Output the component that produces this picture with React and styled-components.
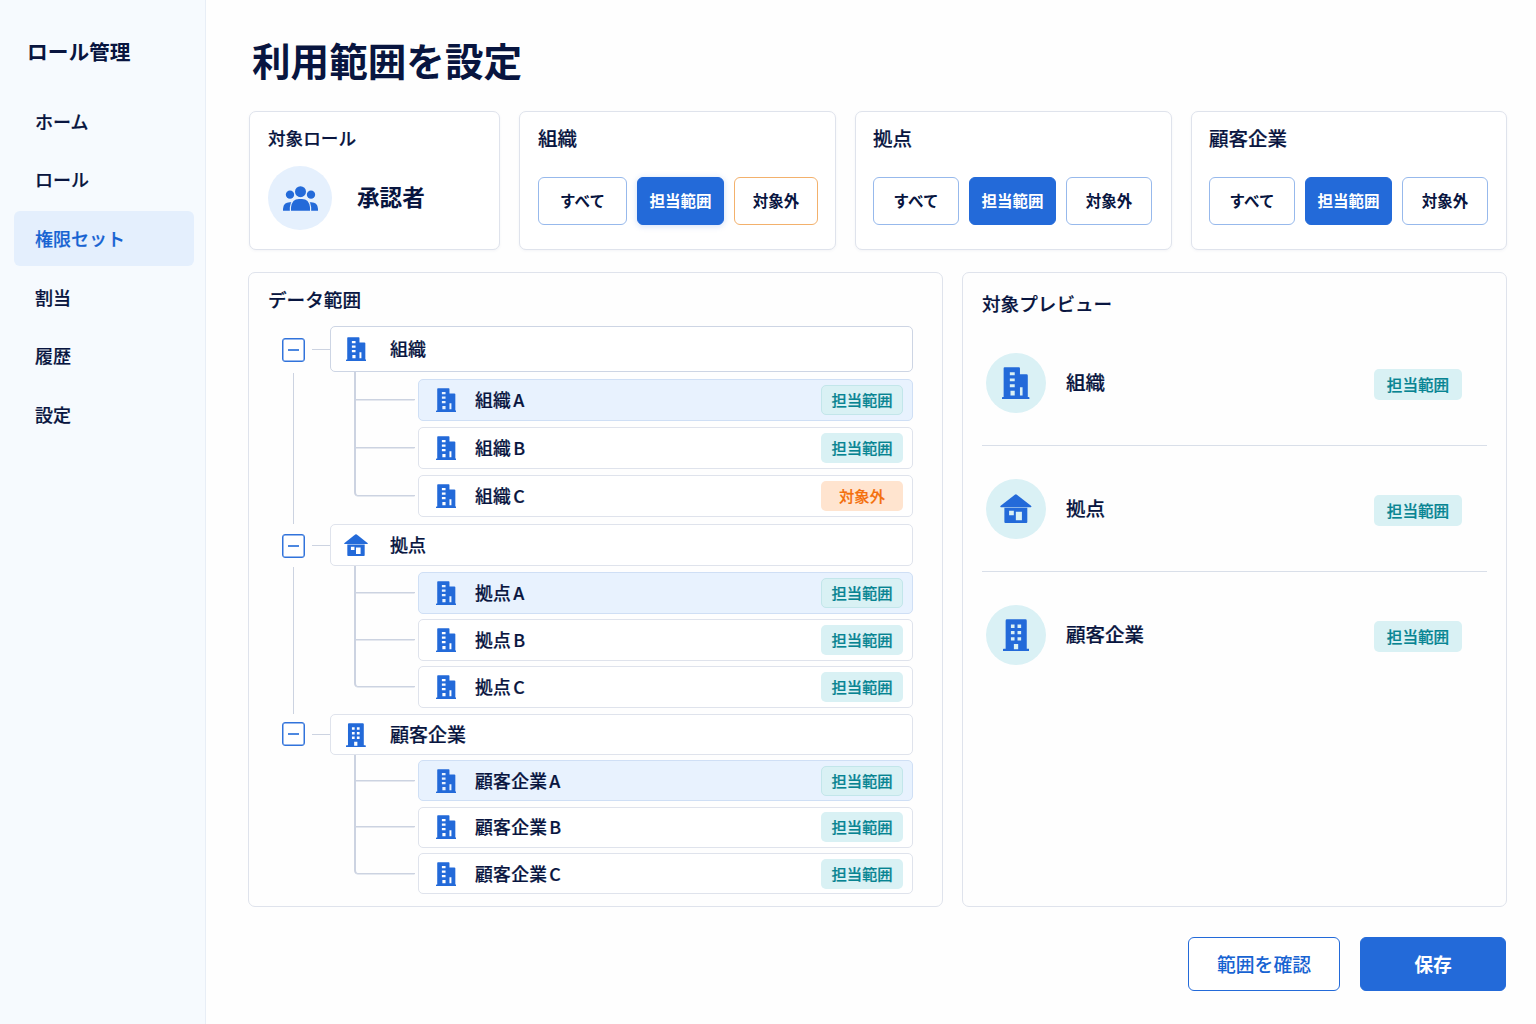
import { useState } from 'react';
import styled, { createGlobalStyle, css, ThemeProvider } from 'styled-components';

const theme = {
  colors: {
    text: '#08153f',
    primary: '#236ad9',
    link: '#1763d2',
    sidebar: '#f6fafe',
    active: '#e4effd',
    border: '#dfe3ec',
    line: '#ccd3e1',
    teal: '#078492',
    tealBg: '#d9f1f4',
    orange: '#f46f0b',
    orangeBg: '#ffe4cf',
  },
};

const GlobalStyle = createGlobalStyle`
  * {
    box-sizing: border-box;
  }

  body {
    margin: 0;
    background: #fefefe;
    color: ${theme.colors.text};
    font-family: "Noto Sans CJK JP", "Noto Sans", sans-serif;
    font-weight: 500;
  }

  button {
    font: inherit;
    color: inherit;
    cursor: pointer;
  }
`;

// sits between the Medium and Bold cuts of the font
const semiBold = css`
  -webkit-text-stroke: 0.2px currentColor;
`;

const Layout = styled.div`
  display: flex;
  width: 1536px;
  height: 1024px;
  overflow: hidden;
`;

const Sidebar = styled.aside`
  flex: none;
  width: 206px;
  padding: 35px 11px 0 14px;
  background: ${({ theme }) => theme.colors.sidebar};
  border-right: 1px solid #e8eef6;
`;

const Brand = styled.div`
  height: 32px;
  padding-left: 13px;
  font-size: 20.7px;
  line-height: 32px;
  font-weight: 700;
`;

const Nav = styled.nav`
  display: flex;
  flex-direction: column;
  gap: 3.7px;
  margin-top: 27px;
`;

const NavItem = styled.a`
  display: flex;
  align-items: center;
  height: 55px;
  padding: 0 0 2px 21px;
  border-radius: 6px;
  font-size: 18px;
  ${semiBold}
  background: ${({ theme, $active }) => ($active ? theme.colors.active : 'transparent')};
  color: ${({ theme, $active }) => ($active ? theme.colors.link : theme.colors.text)};
`;

const Main = styled.main`
  display: flex;
  flex-direction: column;
  flex: 1;
  padding: 29px 29px 0 42px;
`;

const PageTitle = styled.h1`
  height: 60px;
  margin: 0 0 22px;
  padding-left: 4px;
  font-size: 38.6px;
  line-height: 60px;
  font-weight: 700;
`;

const Filters = styled.section`
  display: grid;
  grid-template-columns: 251px 317px 317px 316px;
  gap: 19px;
  padding-left: 1px;
`;

const Card = styled.div`
  height: 139px;
  padding: 12px 17px 0 ${({ $inset = 17 }) => $inset}px;
  border: 1px solid ${({ theme }) => theme.colors.border};
  border-radius: 7px;
  background: #fff;
  box-shadow: 0 1px 3px rgba(30, 60, 120, 0.05);
`;

const CardTitle = styled.h2`
  margin: 0;
  height: 28px;
  line-height: 28px;
  font-size: ${({ $size = 19.5 }) => $size}px;
  font-weight: 500;
  ${semiBold}
`;

const RoleRow = styled.div`
  display: flex;
  align-items: center;
  gap: 25px;
  margin-top: 14px;
  font-size: 22.6px;
  font-weight: 700;
`;

const RoleName = styled.span`
  padding-bottom: 4px;
`;

const IconCircle = styled.span`
  display: flex;
  align-items: center;
  justify-content: center;
  flex: none;
  width: ${({ $size }) => $size}px;
  height: ${({ $size }) => $size}px;
  border-radius: 50%;
  background: ${({ $tone }) => ($tone === 'blue' ? '#e5f0fd' : '#daf1f5')};
  color: ${({ theme }) => theme.colors.primary};
`;

const Options = styled.div`
  display: grid;
  grid-template-columns: ${({ $columns }) => $columns};
  gap: 10px;
  margin-top: 25px;
`;

const Option = styled.button`
  height: 48px;
  padding: 0 0 2px;
  border: 1px solid ${({ $warn }) => ($warn ? '#f3b16c' : '#97b9ec')};
  border-radius: 6px;
  background: #fff;
  font-size: 15.5px;
  font-weight: 700;

  ${({ $selected, $raised, theme }) =>
    $selected &&
    css`
      border-color: ${theme.colors.primary};
      background: ${theme.colors.primary};
      color: #fff;
      box-shadow: ${$raised ? '0 1px 6px rgba(35, 106, 217, 0.22)' : 'none'};
    `}
`;

const Panels = styled.section`
  display: grid;
  grid-template-columns: 695px 545px;
  gap: 19px;
  margin-top: 22px;
`;

const Panel = styled.div`
  height: 635px;
  padding: ${({ $padding }) => $padding};
  border: 1px solid ${({ theme }) => theme.colors.border};
  border-radius: 7px;
`;

const PanelTitle = styled.h2`
  height: 28px;
  margin: 0;
  line-height: 28px;
  font-size: 18.6px;
  font-weight: 500;
  ${semiBold}
`;

const Tree = styled.div`
  margin-top: 13px;
  padding-left: 14px;
`;

const Group = styled.div`
  display: flex;
`;

const Rail = styled.div`
  display: flex;
  flex-direction: column;
  align-items: center;
  width: 23px;
`;

const ToggleSlot = styled.div`
  display: flex;
  align-items: center;
  height: ${({ $height }) => $height}px;
`;

const Toggle = styled.button`
  display: flex;
  align-items: center;
  justify-content: center;
  width: 23px;
  height: 24px;
  padding: 0;
  border: 1px solid #3173db;
  border-radius: 3px;
  background: #fff;
  box-shadow: inset 0 0 0 0.5px #3173db;

  &::before {
    content: "";
    width: 11px;
    height: 2px;
    background: #4d88e0;
  }
`;

const RailLine = styled.div`
  flex: 1;
  width: 1px;
  background: ${({ theme }) => theme.colors.line};
`;

const Connector = styled.div`
  width: 18px;
  height: 1px;
  margin: ${({ $top }) => $top}px 0 0 7px;
  background: ${({ theme }) => theme.colors.line};
`;

const GroupBody = styled.div`
  width: 583px;
  padding-bottom: ${({ $tail }) => $tail}px;
`;

const NodeBox = styled.div`
  display: flex;
  align-items: center;
  border: 1px solid ${({ $strong }) => ($strong ? '#cdd5e4' : '#dfe3ec')};
  border-radius: 5px;
  background: #fff;
  ${semiBold}
`;

const ParentNode = styled(NodeBox)`
  height: ${({ $height }) => $height}px;
  padding-left: 13px;
  font-size: ${({ $size }) => $size}px;
`;

const NodeIcon = styled.span`
  display: flex;
  justify-content: center;
  width: ${({ $width }) => $width}px;
  color: ${({ theme }) => theme.colors.primary};
`;

const ParentLabel = styled.span`
  margin-left: 22px;
  padding-bottom: 2px;
`;

const ChildRow = styled.div`
  display: flex;
  padding-left: 24px;
`;

const Branch = styled.div`
  width: 61px;
  margin-right: 3px;
`;

const Elbow = styled.div`
  height: ${({ $height }) => $height}px;
  border: solid ${({ theme }) => theme.colors.line};
  border-width: 0 0 1px 2px;
  border-bottom-left-radius: ${({ $last }) => ($last ? 4 : 0)}px;
  box-shadow: 0 1px 0 -0.5px ${({ theme }) => theme.colors.line};
`;

const Stem = styled.div`
  height: ${({ $height }) => $height}px;
  border-left: 2px solid ${({ theme }) => theme.colors.line};
`;

const ChildNode = styled(NodeBox)`
  flex: 1;
  height: ${({ $height }) => $height}px;
  margin-top: ${({ $gap }) => $gap}px;
  padding: 0 9px 0 16px;
  font-size: 17.8px;
  letter-spacing: 0.3px;

  ${({ $active }) =>
    $active &&
    css`
      background: #e8f2fe;
      border-color: #cfdff5;
    `}
`;

const ChildLabel = styled.span`
  flex: 1;
  margin-left: 18px;
  padding-bottom: 2px;
`;

const Suffix = styled.span`
  margin-left: 2px;
`;

const Badge = styled.span`
  display: flex;
  align-items: center;
  justify-content: center;
  flex: none;
  width: ${({ $large }) => ($large ? 88 : 82)}px;
  height: ${({ $large }) => ($large ? 31 : 30)}px;
  padding-bottom: 2px;
  border: 1px solid ${({ $outlined }) => ($outlined ? '#c2e6ea' : 'transparent')};
  border-radius: 5px;
  font-size: ${({ $large }) => ($large ? 15.6 : 15.3)}px;
  letter-spacing: 0;
  ${semiBold}
  background: ${({ theme, $warn }) => ($warn ? theme.colors.orangeBg : theme.colors.tealBg)};
  color: ${({ theme, $warn }) => ($warn ? theme.colors.orange : theme.colors.teal)};
`;

const PreviewList = styled.div`
  margin-top: 2px;
`;

const PreviewRow = styled.div`
  display: flex;
  align-items: center;
  height: 126px;
  padding: 0 25px 0 4px;
  border-top: 1px solid #d9dfe9;
  font-size: 19.5px;
  ${semiBold}

  &:first-child {
    border-color: transparent;
  }
`;

const PreviewLabel = styled.span`
  flex: 1;
  margin-left: 20px;
  padding-bottom: 2px;
`;

const BadgeSlot = styled.span`
  padding-top: 4px;
`;

const Footer = styled.footer`
  display: flex;
  justify-content: flex-end;
  gap: 20px;
  margin-top: 30px;
  padding-right: 1px;
`;

const FooterButton = styled.button`
  width: ${({ $width }) => $width}px;
  height: 54px;
  padding-bottom: 2px;
  border: 1px solid ${({ theme }) => theme.colors.primary};
  border-radius: 6px;
  font-size: 18.8px;
  font-weight: ${({ $primary }) => ($primary ? 700 : 500)};
  background: ${({ theme, $primary }) => ($primary ? theme.colors.primary : '#fff')};
  color: ${({ theme, $primary }) => ($primary ? '#fff' : theme.colors.link)};
`;

function BuildingIcon({ height = 24 }) {
  return (
    <svg width={(height * 84) / 98} height={height} viewBox="0 0 84 98" fill="currentColor" fillRule="evenodd">
      <path d="M5 92V4a3 3 0 0 1 3-3h44a3 3 0 0 1 3 3v18h20a4 4 0 0 1 4 4v66h3a2 2 0 0 1 2 2v4H0v-4a2 2 0 0 1 2-2zM24 16v9h15v-9zM24 35v9h15v-9zM24 53v9h15v-9zM26 73v14h13V73zM55 62v25h8V62z" />
    </svg>
  );
}

function HouseIcon({ height = 22 }) {
  return (
    <svg width={(height * 94) / 86} height={height} viewBox="0 0 94 86" fill="currentColor" fillRule="evenodd">
      <path d="M44 2a5 5 0 0 1 6 0l42 33q3 4-1 4H3q-4 0-1-4z" />
      <path d="M13 41h68v42a3 3 0 0 1-3 3H16a3 3 0 0 1-3-3zM27 50v13h14V50zM47 53v25h18V53z" />
    </svg>
  );
}

function OfficeIcon({ height = 24 }) {
  return (
    <svg width={(height * 80) / 97} height={height} viewBox="0 0 80 97" fill="currentColor" fillRule="evenodd">
      <path d="M8 90V5a4 4 0 0 1 4-4h56a4 4 0 0 1 4 4v85h6a2 2 0 0 1 2 2v5H0v-5a2 2 0 0 1 2-2zM24 17v10h11V17zM44 17v10h11V17zM24 36v10h11V36zM44 36v10h11V36zM24 55v10h11V55zM44 55v10h11V55zM33 76v16h13V76z" />
    </svg>
  );
}

function PeopleIcon() {
  return (
    <svg width="35" height="25" viewBox="0 0 105 75" fill="currentColor">
      <circle cx="21" cy="26" r="12.500" />
      <circle cx="84" cy="26" r="12.500" />
      <path d="M0 74V68Q2 49 20 49H85Q103 49 105 68V74Z" />
      <g stroke="#e5f0fd" strokeWidth="7" paintOrder="stroke">
        <circle cx="52.500" cy="17" r="16.500" />
        <path d="M24 74V64Q27 39 48 39H57Q78 39 81 64V74Z" />
      </g>
    </svg>
  );
}

const icons = {
  building: BuildingIcon,
  house: HouseIcon,
  office: OfficeIcon,
};

const navItems = ['ホーム', 'ロール', '権限セット', '割当', '履歴', '設定'];
const options = ['すべて', '担当範囲', '対象外'];

const filters = [
  { title: '組織', columns: '89px 87px 84px', inset: 18, highlight: true },
  { title: '拠点', columns: '86px 87px 86px' },
  { title: '顧客企業', columns: '86px 87px 86px' },
];

const groups = [
  { name: '組織', icon: 'building', size: 18, head: 46, lead: 7, row: 42, gap: 6, tail: 7, excluded: ['C'] },
  { name: '拠点', icon: 'house', size: 18, head: 42, lead: 6, row: 42, gap: 5, tail: 6, excluded: [] },
  { name: '顧客企業', icon: 'office', size: 19, head: 41, lead: 5, row: 41, gap: 5.5, tail: 0, excluded: [] },
];

const previews = [
  { name: '組織', icon: 'building', height: 32 },
  { name: '拠点', icon: 'house', height: 29 },
  { name: '顧客企業', icon: 'office', height: 32 },
];

function FilterCard({ title, columns, inset, highlight }) {
  const [selected, setSelected] = useState('担当範囲');

  return (
    <Card $inset={inset}>
      <CardTitle>{title}</CardTitle>
      <Options $columns={columns}>
        {options.map((option) => (
          <Option
            key={option}
            $selected={option === selected}
            $raised={highlight}
            $warn={highlight && option === '対象外'}
            onClick={() => setSelected(option)}
          >
            {option}
          </Option>
        ))}
      </Options>
    </Card>
  );
}

function TreeGroup({ group, last }) {
  const { name, icon, size, head, lead, row, gap, tail, excluded } = group;
  const Icon = icons[icon];

  return (
    <Group>
      <Rail>
        <ToggleSlot $height={last ? head - 1 : head + 1}>
          <Toggle aria-label={name} />
        </ToggleSlot>
        {!last && <RailLine />}
      </Rail>
      <Connector $top={Math.floor(head / 2)} />
      <GroupBody $tail={tail}>
        <ParentNode $height={head} $size={size} $strong={icon === 'building'}>
          <NodeIcon $width={24}>
            <Icon />
          </NodeIcon>
          <ParentLabel>{name}</ParentLabel>
        </ParentNode>
        {['A', 'B', 'C'].map((suffix, i) => {
          const space = i === 0 ? lead : gap;
          const isLast = i === 2;
          const warn = excluded.includes(suffix);
          return (
            <ChildRow key={suffix}>
              <Branch>
                <Elbow $height={space + row / 2} $last={isLast} />
                {!isLast && <Stem $height={row / 2} />}
              </Branch>
              <ChildNode $height={row} $gap={space} $active={i === 0}>
                <NodeIcon $width={22}>
                  <BuildingIcon />
                </NodeIcon>
                <ChildLabel>
                  {name}
                  <Suffix>{suffix}</Suffix>
                </ChildLabel>
                <Badge $warn={warn} $outlined={i === 0}>
                  {warn ? '対象外' : '担当範囲'}
                </Badge>
              </ChildNode>
            </ChildRow>
          );
        })}
      </GroupBody>
    </Group>
  );
}

export default function App() {
  return (
    <ThemeProvider theme={theme}>
      <GlobalStyle />
      <Layout>
        <Sidebar>
          <Brand>ロール管理</Brand>
          <Nav>
            {navItems.map((item) => (
              <NavItem key={item} $active={item === '権限セット'}>
                {item}
              </NavItem>
            ))}
          </Nav>
        </Sidebar>
        <Main>
          <PageTitle>利用範囲を設定</PageTitle>
          <Filters>
            <Card $inset={18}>
              <CardTitle $size={17.6}>対象ロール</CardTitle>
              <RoleRow>
                <IconCircle $size={64} $tone="blue">
                  <PeopleIcon />
                </IconCircle>
                <RoleName>承認者</RoleName>
              </RoleRow>
            </Card>
            {filters.map((filter) => (
              <FilterCard key={filter.title} {...filter} />
            ))}
          </Filters>
          <Panels>
            <Panel $padding="12px 28px 0 19px">
              <PanelTitle>データ範囲</PanelTitle>
              <Tree>
                {groups.map((group, i) => (
                  <TreeGroup key={group.name} group={group} last={i === groups.length - 1} />
                ))}
              </Tree>
            </Panel>
            <Panel $padding="16px 19px 0">
              <PanelTitle>対象プレビュー</PanelTitle>
              <PreviewList>
                {previews.map(({ name, icon, height }) => {
                  const Icon = icons[icon];
                  return (
                    <PreviewRow key={name}>
                      <IconCircle $size={60} $tone="teal">
                        <Icon height={height} />
                      </IconCircle>
                      <PreviewLabel>{name}</PreviewLabel>
                      <BadgeSlot>
                        <Badge $large>担当範囲</Badge>
                      </BadgeSlot>
                    </PreviewRow>
                  );
                })}
              </PreviewList>
            </Panel>
          </Panels>
          <Footer>
            <FooterButton $width={152}>範囲を確認</FooterButton>
            <FooterButton $width={146} $primary>
              保存
            </FooterButton>
          </Footer>
        </Main>
      </Layout>
    </ThemeProvider>
  );
}
